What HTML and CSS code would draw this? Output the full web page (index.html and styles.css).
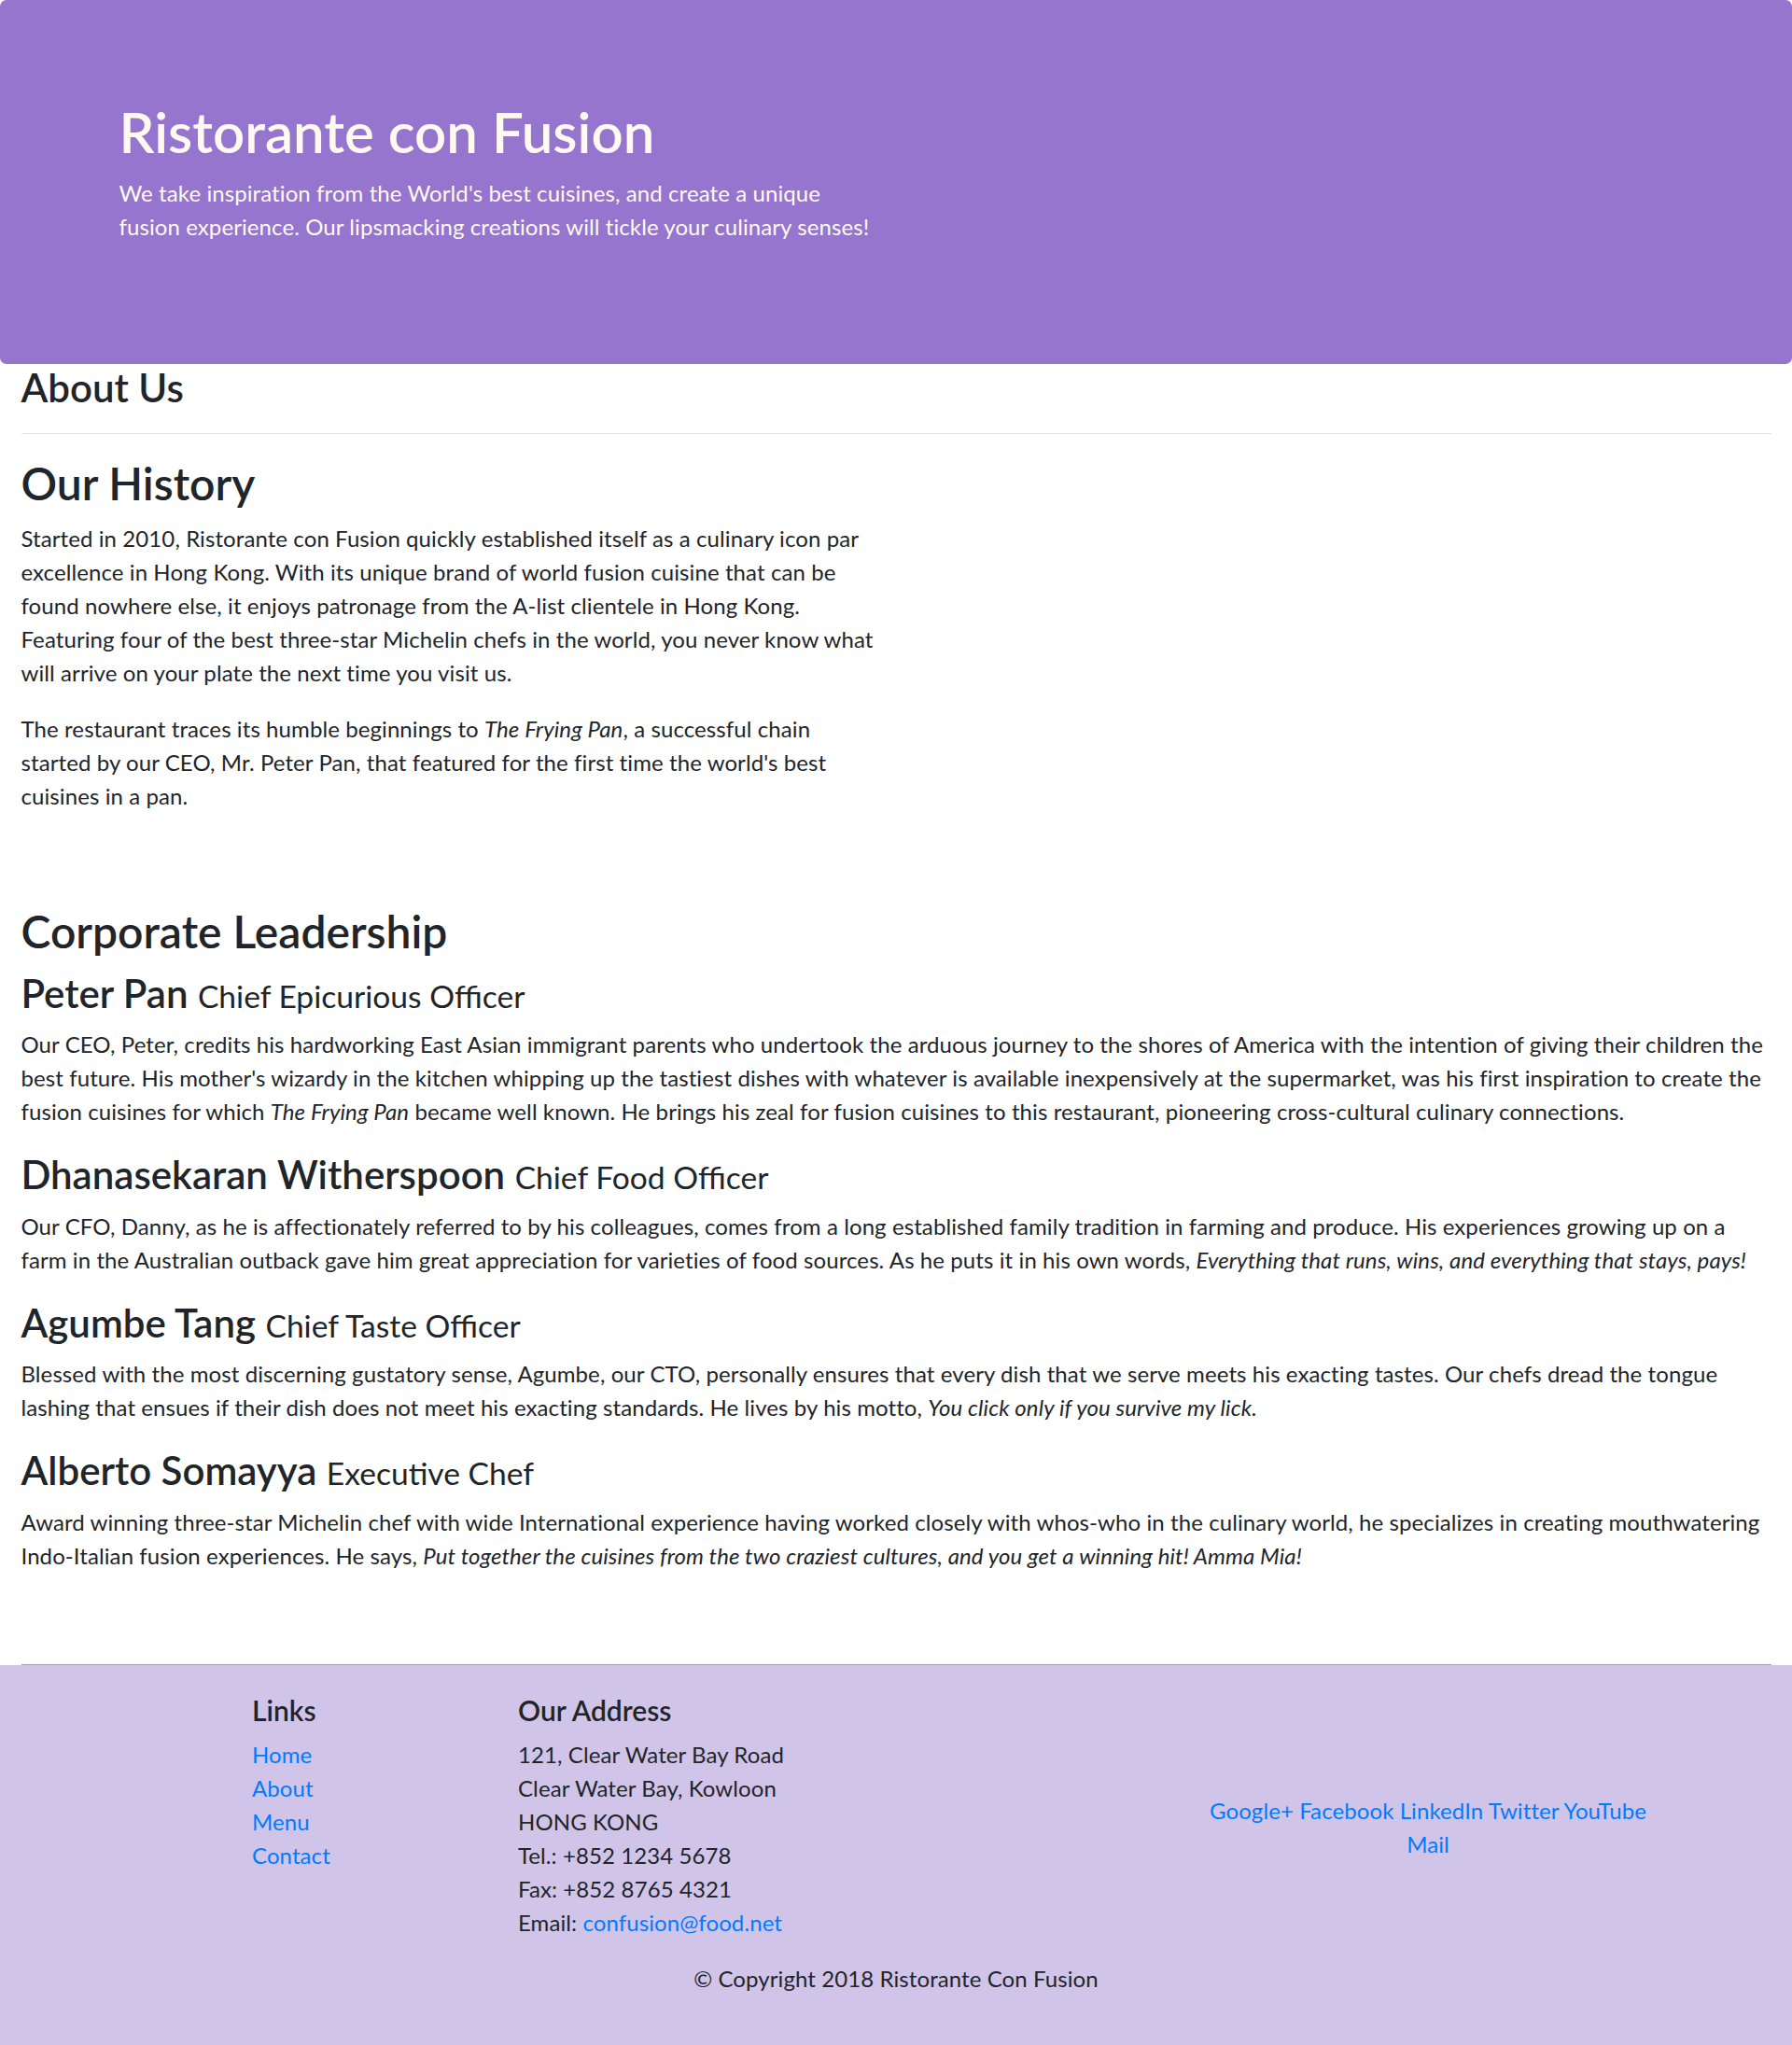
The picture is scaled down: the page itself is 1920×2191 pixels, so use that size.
FILE: index.html
```
<!DOCTYPE html>
<html lang="en">
<head>
<meta charset="utf-8">
<title>Ristorante Con Fusion: About Us</title>
<link rel="stylesheet" href="styles.css">
</head>
<body>
<header class="jumbotron">
  <div class="container">
    <div class="row-header">
      <div class="header-text">
        <h1 class="brand">Ristorante con Fusion</h1>
        <p class="lead-text">We take inspiration from the World's best cuisines, and create a unique fusion experience. Our lipsmacking creations will tickle your culinary senses!</p>
      </div>
    </div>
  </div>
</header>

<main class="container-fluid">
  <section class="page-title">
    <h3 class="h3">About Us</h3>
    <hr class="rule">
  </section>

  <section class="history">
    <div class="history-col">
      <h2 class="h2">Our History</h2>
      <p class="text">Started in 2010, Ristorante con Fusion quickly established itself as a culinary icon par excellence in Hong Kong. With its unique brand of world fusion cuisine that can be found nowhere else, it enjoys patronage from the A-list clientele in Hong Kong. Featuring four of the best three-star Michelin chefs in the world, you never know what will arrive on your plate the next time you visit us.</p>
      <p class="text">The restaurant traces its humble beginnings to <em>The Frying Pan</em>, a successful chain started by our CEO, Mr. Peter Pan, that featured for the first time the world's best cuisines in a pan.</p>
    </div>
    <div class="history-col"></div>
  </section>

  <section class="leadership">
    <h2 class="h2">Corporate Leadership</h2>
    <ul class="media-list">
      <li class="media">
        <h3 class="h3 person">Peter Pan <small class="role">Chief Epicurious Officer</small></h3>
        <p class="text">Our CEO, Peter, credits his hardworking East Asian immigrant parents who undertook the arduous journey to the shores of America with the intention of giving their children the best future. His mother's wizardy in the kitchen whipping up the tastiest dishes with whatever is available inexpensively at the supermarket, was his first inspiration to create the fusion cuisines for which <em>The Frying Pan</em> became well known. He brings his zeal for fusion cuisines to this restaurant, pioneering cross-cultural culinary connections.</p>
      </li>
      <li class="media">
        <h3 class="h3 person">Dhanasekaran Witherspoon <small class="role">Chief Food Officer</small></h3>
        <p class="text">Our CFO, Danny, as he is affectionately referred to by his colleagues, comes from a long established family tradition in farming and produce. His experiences growing up on a farm in the Australian outback gave him great appreciation for varieties of food sources. As he puts it in his own words, <em>Everything that runs, wins, and everything that stays, pays!</em></p>
      </li>
      <li class="media">
        <h3 class="h3 person">Agumbe Tang <small class="role">Chief Taste Officer</small></h3>
        <p class="text">Blessed with the most discerning gustatory sense, Agumbe, our CTO, personally ensures that every dish that we serve meets his exacting tastes. Our chefs dread the tongue lashing that ensues if their dish does not meet his exacting standards. He lives by his motto, <em>You click only if you survive my lick.</em></p>
      </li>
      <li class="media">
        <h3 class="h3 person">Alberto Somayya <small class="role">Executive Chef</small></h3>
        <p class="text">Award winning three-star Michelin chef with wide International experience having worked closely with whos-who in the culinary world, he specializes in creating mouthwatering Indo-Italian fusion experiences. He says, <em>Put together the cuisines from the two craziest cultures, and you get a winning hit! Amma Mia!</em></p>
      </li>
    </ul>
  </section>
</main>

<footer class="footer">
  <div class="container">
    <div class="footer-row">
      <div class="col-links">
        <h5 class="h5">Links</h5>
        <ul class="link-list">
          <li><a class="link" href="#">Home</a></li>
          <li><a class="link" href="#">About</a></li>
          <li><a class="link" href="#">Menu</a></li>
          <li><a class="link" href="#">Contact</a></li>
        </ul>
      </div>
      <div class="col-address">
        <h5 class="h5">Our Address</h5>
        <address class="address">
          121, Clear Water Bay Road<br>
          Clear Water Bay, Kowloon<br>
          HONG KONG<br>
          Tel.: +852 1234 5678<br>
          Fax: +852 8765 4321<br>
          Email: <a class="link" href="#">confusion@food.net</a>
        </address>
      </div>
      <div class="col-social">
        <div class="social">
          <a class="link" href="#">Google+</a>
          <a class="link" href="#">Facebook</a>
          <a class="link" href="#">LinkedIn</a>
          <a class="link" href="#">Twitter</a>
          <a class="link" href="#">YouTube</a>
          <a class="link" href="#">Mail</a>
        </div>
      </div>
    </div>
    <div class="copyright-row">
      <p class="text">© Copyright 2018 Ristorante Con Fusion</p>
    </div>
  </div>
</footer>
</body>
</html>
```
FILE: styles.css
```
* { box-sizing: border-box; }

html, body {
  margin: 0;
  padding: 0;
}

body {
  font-family: "Lato", "Noto Sans", sans-serif;
  font-size: 24px;
  line-height: 1.5;
  letter-spacing: 0.09px;
  color: #212529;
  background: #fff;
}

.container {
  max-width: 1710px;
  margin: 0 auto;
  padding: 0 22.5px;
}

.container-fluid {
  padding: 0 22.5px;
}

.h2, .h3, .h5, .brand {
  margin: 0 0 12px 0;
  font-weight: 600;
  line-height: 1.2;
  letter-spacing: 0;
}

.h2 { font-size: 48px; }
.h3 { font-size: 42px; }
.h5 { font-size: 30px; }

.text {
  margin: 0 0 24px 0;
}

/* Jumbotron */
.jumbotron {
  background-color: #9575cd;
  color: floralwhite;
  padding: 96px 48px;
  border-radius: 7px;
}

.row-header {
  display: flex;
  align-items: center;
  min-height: 198px;
}

.header-text {
  width: 810px;
}

.brand {
  font-size: 60px;
}

.lead-text {
  margin: 0 0 24px 0;
}

/* Page title */
.rule {
  margin: 24px 0;
  border: 0;
  border-top: 1.5px solid rgba(0, 0, 0, 0.1);
  height: 0;
}

/* History */
.history {
  display: grid;
  grid-template-columns: 1fr 1fr;
  column-gap: 45px;
}

/* Leadership */
.leadership {
  margin-top: 74.5px;
  padding-bottom: 74.5px;
  border-bottom: 1.5px solid #a6a6a6;
}

.media-list {
  list-style: none;
  margin: 0;
  padding: 0;
}

.person {
  margin-top: 0;
}

.role {
  font-size: 80%;
  font-weight: 400;
}

/* Footer */
.footer {
  background-color: #d1c4e9;
  padding: 30px 0;
}

.footer-row {
  display: grid;
  grid-template-columns: 142.5px 285px 712.5px 570px;
  margin: 0 -22.5px;
}

.col-links {
  grid-column: 2;
  padding: 0 22.5px;
}

.col-address {
  grid-column: 3;
  padding: 0 22.5px;
}

.col-social {
  grid-column: 4;
  padding: 0 22.5px;
  align-self: center;
}

.social {
  text-align: center;
  padding: 0 8px;
}

.link-list {
  list-style: none;
  margin: 0 0 24px 0;
  padding: 0;
}

.link {
  color: #007bff;
  text-decoration: none;
}

.address {
  font-style: normal;
  margin: 0 0 24px 0;
}

.copyright-row {
  display: flex;
  justify-content: center;
}
```
